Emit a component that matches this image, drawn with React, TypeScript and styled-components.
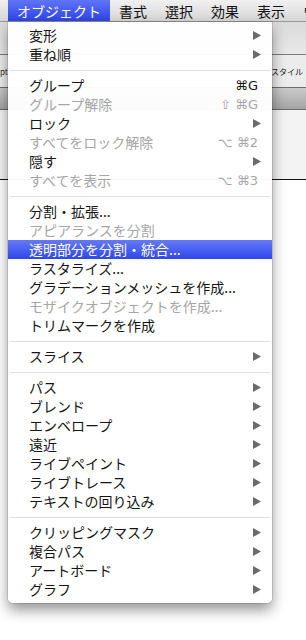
import { createGlobalStyle, styled } from "styled-components";

type TItem =
  | { sep: true }
  | {
      sep?: false;
      label: string;
      disabled?: boolean;
      submenu?: boolean;
      shortcut?: string;
      active?: boolean;
    };

const MENU_TITLES = ["オブジェクト", "書式", "選択", "効果", "表示", "ウィンドウ"];

const ITEMS: TItem[] = [
  { label: "変形", submenu: true },
  { label: "重ね順", submenu: true },
  { sep: true },
  { label: "グループ", shortcut: "⌘G" },
  { label: "グループ解除", disabled: true, shortcut: "⇧ ⌘G" },
  { label: "ロック", submenu: true },
  { label: "すべてをロック解除", disabled: true, shortcut: "⌥ ⌘2" },
  { label: "隠す", submenu: true },
  { label: "すべてを表示", disabled: true, shortcut: "⌥ ⌘3" },
  { sep: true },
  { label: "分割・拡張..." },
  { label: "アピアランスを分割", disabled: true },
  { label: "透明部分を分割・統合...", active: true },
  { label: "ラスタライズ..." },
  { label: "グラデーションメッシュを作成..." },
  { label: "モザイクオブジェクトを作成...", disabled: true },
  { label: "トリムマークを作成" },
  { sep: true },
  { label: "スライス", submenu: true },
  { sep: true },
  { label: "パス", submenu: true },
  { label: "ブレンド", submenu: true },
  { label: "エンベロープ", submenu: true },
  { label: "遠近", submenu: true },
  { label: "ライブペイント", submenu: true },
  { label: "ライブトレース", submenu: true },
  { label: "テキストの回り込み", submenu: true },
  { sep: true },
  { label: "クリッピングマスク", submenu: true },
  { label: "複合パス", submenu: true },
  { label: "アートボード", submenu: true },
  { label: "グラフ", submenu: true },
];

const Arrow = () => (
  <svg width="8" height="9" viewBox="0 0 8 9">
    <path d="M0 0 L8 4.5 L0 9 Z" fill="#6b6b6b" />
  </svg>
);

const App = () => {
  return (
    <Page>
      <GlobalStyle />
      <MenuBar>
        {MENU_TITLES.map((t, i) => (
          <MenuTitle key={t} $active={i === 0}>
            {t}
          </MenuTitle>
        ))}
      </MenuBar>

      <Toolbar />
      <ControlBar>
        <Small>pt</Small>
        <Small>スタイル</Small>
      </ControlBar>
      <TabBar />
      <Ruler />
      <Canvas />

      <Dropdown>
        {ITEMS.map((item, i) =>
          item.sep ? (
            <Separator key={i} />
          ) : (
            <Row key={i} $active={item.active} $disabled={item.disabled}>
              <span>{item.label}</span>
              {item.submenu && <Arrow />}
              {item.shortcut && <Shortcut>{item.shortcut}</Shortcut>}
            </Row>
          )
        )}
      </Dropdown>
    </Page>
  );
};

export default App;

const GlobalStyle = createGlobalStyle`
  body {
    margin: 0;
    background: #fff;
    font-family: "Noto Sans CJK JP", "Noto Sans", sans-serif;
  }
`;

const Page = styled.div`
  position: relative;
  width: 306px;
  height: 640px;
  overflow: hidden;
  background: #fff;
`;

const MenuBar = styled.div`
  display: flex;
  height: 22px;
  padding-left: 8px;
  background: linear-gradient(#f1f1f1, #d6d6d6);
  border-bottom: 1px solid #9a9a9a;
  box-sizing: border-box;
  white-space: nowrap;
`;

const MenuTitle = styled.div<{ $active?: boolean }>`
  padding: 0 9px;
  font-size: 14px;
  line-height: 22px;
  color: ${({ $active }) => ($active ? "#fff" : "#111")};
  background: ${({ $active }) =>
    $active ? "linear-gradient(#6074f6, #2c44e9)" : "transparent"};
`;

const Toolbar = styled.div`
  height: 32px;
  background: linear-gradient(#dadada, #e8e8e8);
  border-bottom: 1px solid #7a7a7a;
`;

const ControlBar = styled.div`
  display: flex;
  align-items: center;
  justify-content: space-between;
  height: 32px;
  padding-right: 3px;
  background: #ececec;
  border-bottom: 1px solid #6e6e6e;
`;

const Small = styled.span`
  font-size: 8px;
  color: #222;
`;

const TabBar = styled.div`
  height: 21px;
  background: linear-gradient(#cacaca, #a4a4a4);
  border-bottom: 1px solid #6a6a6a;
`;

const Ruler = styled.div`
  height: 69px;
  background: #f3f3f3;
  border-bottom: 1px solid #111;
`;

const Canvas = styled.div`
  height: 460px;
  background: #fff;
`;

const Dropdown = styled.div`
  position: absolute;
  top: 22px;
  left: 8px;
  width: 264px;
  padding: 4px 0;
  background: rgba(255, 255, 255, 0.96);
  border-radius: 0 0 5px 5px;
  box-shadow: 0 7px 14px rgba(0, 0, 0, 0.42), 0 0 0 1px rgba(0, 0, 0, 0.1);
`;

const Row = styled.div<{ $active?: boolean; $disabled?: boolean }>`
  display: flex;
  align-items: center;
  justify-content: space-between;
  height: 19px;
  padding: 0 11px 0 21px;
  font-size: 14px;
  line-height: 19px;
  white-space: nowrap;
  color: ${({ $active, $disabled }) =>
    $active ? "#fff" : $disabled ? "#a6a6a6" : "#151515"};
  background: ${({ $active }) =>
    $active ? "linear-gradient(#6579f6, #2f47ea)" : "transparent"};
`;

const Shortcut = styled.span`
  margin-right: 3px;
  font-family: "DejaVu Sans", sans-serif;
  font-size: 13px;
`;

const Separator = styled.div`
  height: 12px;
  display: flex;
  align-items: center;
  padding: 0 2px;

  &::after {
    content: "";
    flex: 1;
    height: 1px;
    background: #dedede;
  }
`;
